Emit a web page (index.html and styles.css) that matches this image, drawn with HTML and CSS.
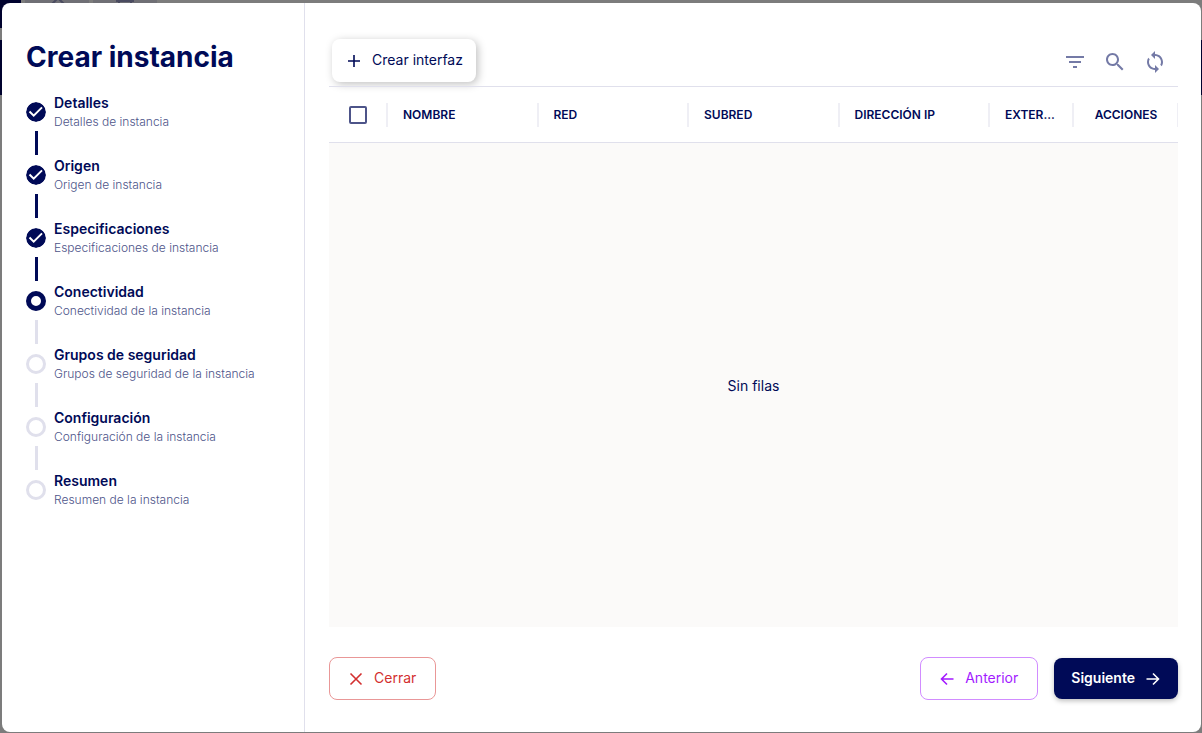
FILE: index.html
```html
<!DOCTYPE html>
<html lang="es">
<head>
    <meta charset="UTF-8">
    <meta name="viewport" content="width=device-width, initial-scale=1.0">
    <title>Crear instancia</title>
    <link rel="stylesheet" href="styles.css">
</head>
<body>
    <!-- Page behind the dialog -->
    <div class="backdrop" aria-hidden="true">
        <div class="backdrop-bar">
            <div class="backdrop-menu"></div>
            <div class="backdrop-tab">
                <svg width="22" height="16" viewBox="0 0 22 16"><path d="M5 5l7-7 7 7" fill="none" stroke="#4a4b60" stroke-width="2"/></svg>
            </div>
            <div class="backdrop-tab">
                <svg width="22" height="16" viewBox="0 0 22 16"><path d="M2 1h18M5 1v3M17 1v3" fill="none" stroke="#4a4b60" stroke-width="2"/></svg>
            </div>
        </div>
        <div class="backdrop-nav"></div>
    </div>

    <div class="dialog" role="dialog" aria-labelledby="dialog-title">
        <!-- Steps -->
        <aside class="sidebar">
            <h1 id="dialog-title">Crear instancia</h1>
            <ol class="steps">
                <li class="step done">
                    <svg class="step-icon" viewBox="0 0 20 20"><circle cx="10" cy="10" r="10"/><path d="M3.500 9.500l4.200 4.200L16 5.400"/></svg>
                    <div class="step-text">
                        <span class="step-title">Detalles</span>
                        <span class="step-desc">Detalles de instancia</span>
                    </div>
                </li>
                <li class="step done">
                    <svg class="step-icon" viewBox="0 0 20 20"><circle cx="10" cy="10" r="10"/><path d="M3.500 9.500l4.200 4.200L16 5.400"/></svg>
                    <div class="step-text">
                        <span class="step-title">Origen</span>
                        <span class="step-desc">Origen de instancia</span>
                    </div>
                </li>
                <li class="step done">
                    <svg class="step-icon" viewBox="0 0 20 20"><circle cx="10" cy="10" r="10"/><path d="M3.500 9.500l4.200 4.200L16 5.400"/></svg>
                    <div class="step-text">
                        <span class="step-title">Especificaciones</span>
                        <span class="step-desc">Especificaciones de instancia</span>
                    </div>
                </li>
                <li class="step active" aria-current="step">
                    <span class="step-icon"></span>
                    <div class="step-text">
                        <span class="step-title">Conectividad</span>
                        <span class="step-desc">Conectividad de la instancia</span>
                    </div>
                </li>
                <li class="step">
                    <span class="step-icon"></span>
                    <div class="step-text">
                        <span class="step-title">Grupos de seguridad</span>
                        <span class="step-desc">Grupos de seguridad de la instancia</span>
                    </div>
                </li>
                <li class="step">
                    <span class="step-icon"></span>
                    <div class="step-text">
                        <span class="step-title">Configuración</span>
                        <span class="step-desc">Configuración de la instancia</span>
                    </div>
                </li>
                <li class="step">
                    <span class="step-icon"></span>
                    <div class="step-text">
                        <span class="step-title">Resumen</span>
                        <span class="step-desc">Resumen de la instancia</span>
                    </div>
                </li>
            </ol>
        </aside>

        <!-- Interfaces -->
        <main class="content">
            <div class="toolbar">
                <button type="button" class="btn btn-create">
                    <svg width="20" height="20" viewBox="0 0 20 20"><path d="M10 5v12M4 11h12"/></svg>
                    Crear interfaz
                </button>
                <div class="tools">
                    <button type="button" class="icon-btn" aria-label="Filtrar">
                        <svg width="24" height="24" viewBox="0 0 24 24"><path d="M10 18h4v-2h-4v2zM3 6v2h18V6H3zm3 7h12v-2H6v2z"/></svg>
                    </button>
                    <button type="button" class="icon-btn" aria-label="Buscar">
                        <svg width="24" height="24" viewBox="0 0 24 24"><path d="M15.500 14h-.79l-.28-.27C15.410 12.590 16 11.110 16 9.500 16 5.910 13.090 3 9.500 3S3 5.910 3 9.500 5.910 16 9.500 16c1.610 0 3.090-.59 4.230-1.570l.27.28v.79l5 4.990L20.490 19l-4.990-5zm-6 0C7.010 14 5 11.990 5 9.500S7.010 5 9.500 5 14 7.010 14 9.500 11.990 14 9.500 14z"/></svg>
                    </button>
                    <button type="button" class="icon-btn" aria-label="Actualizar">
                        <svg width="24" height="24" viewBox="0 0 24 24"><path d="M12 4V1L8 5l4 4V6c3.310 0 6 2.690 6 6 0 1.010-.25 1.970-.7 2.800l1.460 1.460C19.540 15.030 20 13.570 20 12c0-4.420-3.580-8-8-8zm0 14c-3.310 0-6-2.690-6-6 0-1.010.25-1.970.7-2.800L5.240 7.740C4.460 8.970 4 10.430 4 12c0 4.420 3.580 8 8 8v3l4-4-4-4v3z"/></svg>
                    </button>
                </div>
            </div>

            <table class="grid">
                <colgroup>
                    <col class="col-check">
                    <col>
                    <col>
                    <col>
                    <col>
                    <col class="col-external">
                    <col class="col-actions">
                </colgroup>
                <thead>
                    <tr>
                        <th class="cell-check"><input type="checkbox" aria-label="Seleccionar todo"></th>
                        <th>NOMBRE</th>
                        <th>RED</th>
                        <th>SUBRED</th>
                        <th>DIRECCIÓN IP</th>
                        <th>EXTER...</th>
                        <th class="cell-actions">ACCIONES</th>
                    </tr>
                </thead>
            </table>
            <div class="grid-empty">Sin filas</div>

            <div class="footer">
                <button type="button" class="btn btn-close">
                    <svg width="20" height="20" viewBox="0 0 20 20"><path d="M4.500 5.500l11 11M15.500 5.500l-11 11"/></svg>
                    Cerrar
                </button>
                <button type="button" class="btn btn-prev">
                    <svg width="20" height="20" viewBox="0 0 20 20"><path d="M16.500 11h-12M10 5.500L4.500 11l5.500 5.500"/></svg>
                    Anterior
                </button>
                <button type="button" class="btn btn-next">
                    Siguiente
                    <svg width="20" height="20" viewBox="0 0 20 20"><path d="M3.500 11h12M10 5.500l5.500 5.500-5.500 5.500"/></svg>
                </button>
            </div>
        </main>
    </div>
</body>
</html>
```
FILE: styles.css
```css
* {
    box-sizing: border-box;
}
body {
    font-family: Inter, 'Liberation Sans', Arial, sans-serif;
    color: #000a57;
    margin: 0;
    padding: 3px 1px 1px 2px;
    min-height: 100vh;
    display: flex;
    background-color: #7f7f7f;
}

/* Dimmed page */
.backdrop {
    position: absolute;
    inset: 0;
    overflow: hidden;
    background-color: #7c7c7c;
}
.backdrop-bar {
    display: flex;
    gap: 4px;
    height: 28px;
    margin-bottom: 12px;
}
.backdrop-menu {
    width: 21px;
    background-color: #00022e;
}
.backdrop-tab {
    width: 64px;
    background-color: #6f6f75;
    text-align: center;
}
.backdrop-nav {
    height: 55px;
    background-color: #00022e;
}

/* Dialog */
.dialog {
    position: relative;
    flex: 1;
    display: flex;
    background-color: #fff;
    border-radius: 8px;
}
.sidebar {
    width: 303px;
    flex-shrink: 0;
    padding: 32px 24px;
    border-right: 1px solid #e0e0ec;
}
h1 {
    margin: 0 0 13px;
    font-size: 28px;
    line-height: 44px;
    font-weight: 700;
    white-space: nowrap;
}

/* Steps */
.steps {
    list-style: none;
    margin: 0;
    padding: 0;
}
.step {
    display: flex;
    flex-wrap: wrap;
    align-items: center;
    gap: 0 8px;
}
.step:not(:last-child)::after {
    content: '';
    width: 3px;
    height: 24px;
    margin-left: 9px;
    background-color: #e0e0ec;
}
.step.done::after {
    background-color: #000a57;
}
.step-icon {
    width: 20px;
    height: 20px;
    border: 3px solid #e0e0ec;
    border-radius: 50%;
}
.step.active .step-icon {
    border: 5px solid #000a57;
}
.step.done .step-icon {
    border: none;
    fill: #000a57;
}
.step-icon path {
    fill: none;
    stroke: #fff;
    stroke-width: 2;
}
.step-text {
    width: calc(100% - 28px);
    padding-bottom: 2px;
}
.step-title,
.step-desc {
    display: block;
}
.step-title {
    font-size: 14px;
    line-height: 22px;
    font-weight: 600;
}
.step-desc {
    font-size: 12px;
    line-height: 15px;
    font-weight: 300;
    color: #4d5489;
}

/* Content */
.content {
    flex: 1;
    min-width: 0;
    display: flex;
    flex-direction: column;
    padding: 36px 23px 32px 24px;
}
.toolbar {
    display: flex;
    justify-content: space-between;
    align-items: flex-start;
    padding: 0 3px 4px;
}
.tools {
    display: flex;
    gap: 16px;
    padding: 11px 8px 0 0;
}
.icon-btn {
    display: flex;
    padding: 0;
    border: none;
    background: none;
    cursor: pointer;
}
.icon-btn svg {
    fill: #747aa6;
}
.btn {
    display: flex;
    align-items: center;
    gap: 8px;
    height: 43px;
    padding: 0 19px 2px 16px;
    border: 1px solid transparent;
    border-radius: 8px;
    background-color: #fff;
    font-family: inherit;
    font-size: 14px;
    font-weight: 400;
    color: #000a57;
    cursor: pointer;
}
.btn svg {
    fill: none;
    stroke: currentColor;
    stroke-width: 1.6;
}
.btn-create {
    padding: 0 13px 2px 12px;
    border: none;
    box-shadow: 2px 2px 8px rgba(0, 0, 0, 0.25);
}

/* Grid */
.grid {
    width: 100%;
    table-layout: fixed;
    border-collapse: collapse;
    border-top: 1px solid #e0e0ec;
    border-bottom: 1px solid #e0e0ec;
}
.col-check {
    width: 59px;
}
.col-external {
    width: 84px;
}
.col-actions {
    width: 104px;
}
.grid th {
    height: 56px;
    padding: 0 15px;
    font-size: 12px;
    font-weight: 600;
    text-align: left;
    white-space: nowrap;
    background: linear-gradient(#efeff5, #efeff5) right center / 2px 24px no-repeat;
}
.grid .cell-check {
    padding: 0 0 0 20px;
}
.grid .cell-actions {
    padding: 0;
    text-align: center;
    background-size: 1px 24px;
}
.grid input {
    display: block;
    appearance: none;
    width: 18px;
    height: 18px;
    margin: 0;
    border: 2px solid #4d5489;
    border-radius: 2px;
}
.grid input:checked {
    background-color: #4d5489;
}
.grid-empty {
    flex: 1;
    display: flex;
    align-items: center;
    justify-content: center;
    background-color: #fbfaf9;
    font-size: 14px;
}

/* Footer */
.footer {
    display: flex;
    align-items: center;
    gap: 16px;
    padding-top: 30px;
}
.btn-close {
    margin-right: auto;
    color: #d32f2f;
    border-color: #e99797;
}
.btn-prev {
    color: #a31aff;
    border-color: #d18cff;
}
.btn-next {
    height: 41px;
    padding: 0 15px 2px 17px;
    background-color: #000a57;
    border: none;
    color: #fff;
    font-weight: 600;
    box-shadow: 0 2px 5px rgba(0, 0, 0, 0.25);
}
```
